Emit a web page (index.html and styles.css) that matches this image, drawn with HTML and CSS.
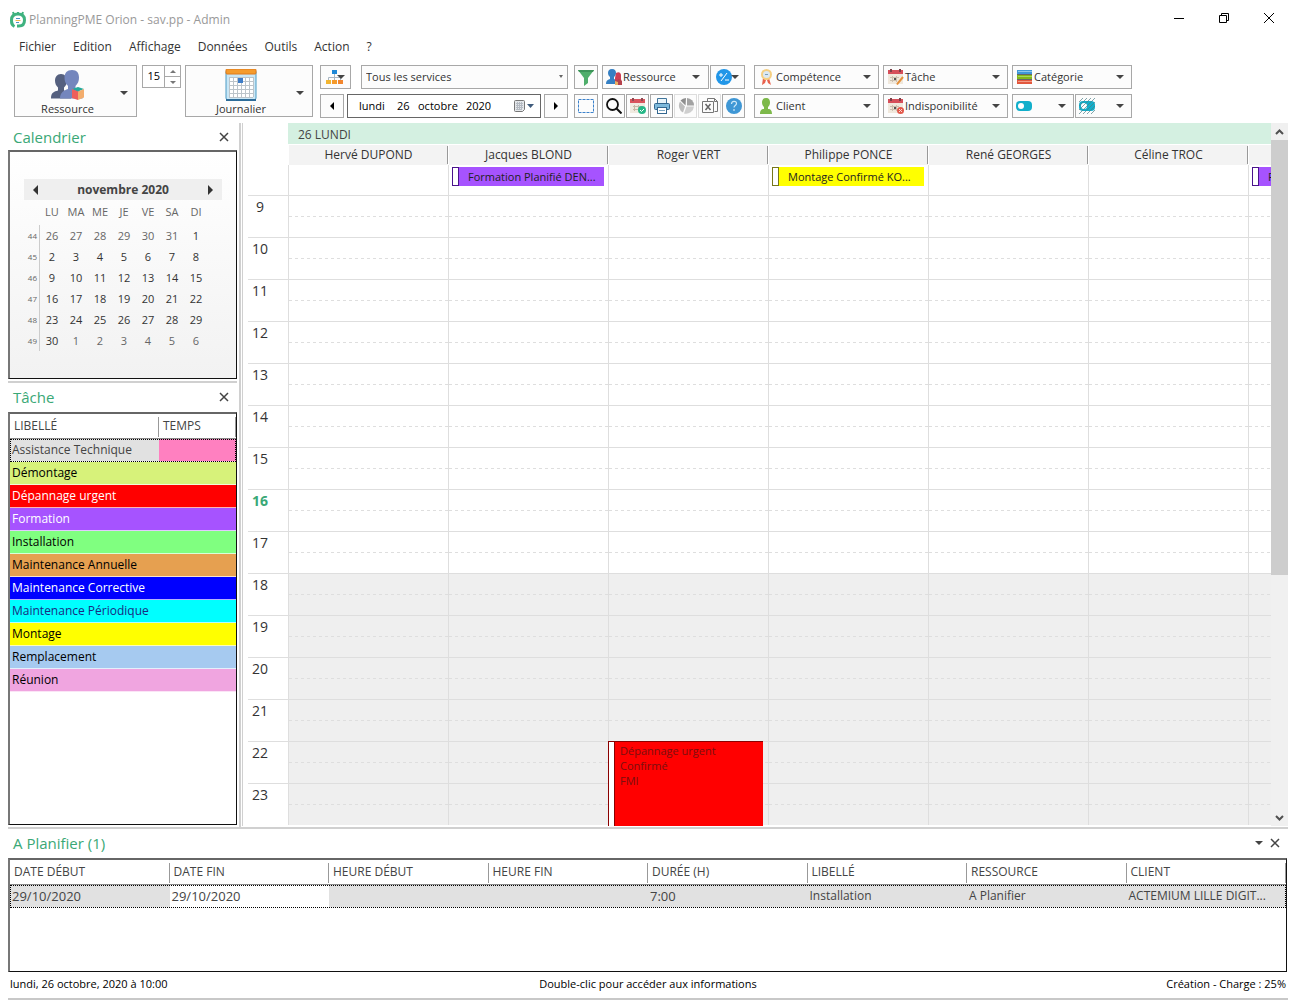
FILE: index.html
```html
<!DOCTYPE html>
<html lang="fr">
  <head>
    <meta charset="utf-8" />
    <title>PlanningPME Orion - sav.pp - Admin</title>
    <link rel="stylesheet" href="styles.css">
  </head>

  <body>
    <div class="app">
      <header class="titlebar">
        <svg class="logo" width="16" height="18" viewBox="0 0 16 18">
          <path d="M4.500 15.500C1.500 14 1.500 12 1.500 9c0-4 2-6 6.500-6s6.500 2 6.500 6-2 6-5.500 6H7" fill="none" stroke="#3fb27f" stroke-width="3" />
          <path d="M4 4L3 1M8 3V1M12 4l1-3" stroke="#3fb27f" stroke-width="2" />
          <path d="M6 7.500h4M6 11.500h3" stroke="#4b8fc4" />
          <path d="M5.500 9.500h5" stroke="#f2b84b" />
        </svg>
        <span class="title">PlanningPME Orion - sav.pp - Admin</span>
        <div class="win-btns">
          <button class="win-btn" aria-label="Réduire"><svg width="12" height="12"><path d="M1 6.500h10" stroke="#000" /></svg></button>
          <button class="win-btn" aria-label="Restaurer"><svg width="12" height="12"><path d="M1.500 3.500h7v7h-7zM3.500 3.500v-2h7v7h-2" fill="none" stroke="#000" /></svg></button>
          <button class="win-btn" aria-label="Fermer"><svg width="12" height="12"><path d="M1 1l10 10M11 1L1 11" stroke="#000" /></svg></button>
        </div>
      </header>

      <nav class="menubar">
        <button>Fichier</button>
        <button>Edition</button>
        <button>Affichage</button>
        <button>Données</button>
        <button>Outils</button>
        <button>Action</button>
        <button>?</button>
      </nav>

      <div class="toolbar">
        <button class="big-btn">
          <span class="big-face">
            <svg width="34" height="32" viewBox="0 0 34 32">
              <path d="M10 5c4 0 6 3 6 6.500 0 3-1 5-3 7v3c4 1 7 3 7 8H0c0-6 3-7 7-8v-3c-2-2-3-4-3-7C4 8 6 5 10 5z" fill="#55607f" />
              <path d="M21 1c5 0 7 3 7 7.500 0 3.500-1 6-3.500 8.500v3c4 1 7 3 7 9.500H9c0-6 4-8 8-9.500v-3c-2.500-2.500-3.500-5-3.500-8.500C13.500 4 16 1 21 1z" fill="#7486bd" />
              <path d="M21 20l6-2 6 2-6 2.500z" fill="#25a99c" />
              <path d="M21 20l6 2.500V31l-6-2z" fill="#ee5f5b" />
              <path d="M27 22.500l6-2.500v8.500L27 31z" fill="#f3ad6d" />
            </svg>
            Ressource
          </span>
          <svg class="caret" width="8" height="4"><path d="M0 0h8L4 4z" /></svg>
        </button>

        <div class="spin">
          <input type="text" value="15" aria-label="Intervalle" />
          <div class="spin-btns">
            <button aria-label="Plus"><svg width="6" height="3"><path d="M0 3h6L3 0z" fill="#777" /></svg></button>
            <button aria-label="Moins"><svg width="6" height="3"><path d="M0 0h6L3 3z" fill="#777" /></svg></button>
          </div>
        </div>

        <button class="big-btn big-view">
          <span class="big-face">
            <svg width="32" height="32" viewBox="0 0 32 32">
              <rect x="1" y="1" width="30" height="30" rx="2" fill="#c9e7f6" stroke="#4a9ac4" />
              <path d="M1 31h30" stroke="#2d6c99" stroke-width="2" />
              <rect x="1" y="0" width="30" height="5" rx="1" fill="#f59b2c" stroke="#dd7a1c" />
              <rect x="4" y="8" width="24" height="20" fill="#fff" />
              <path d="M4 8.500h24M4 12.500h24M4 16.500h24M4 20.500h24M4 24.500h24M4 28.500h24M4.500 8v20M8.500 8v20M12.500 8v20M16.500 8v20M20.500 8v20M24.500 8v20M28.500 8v20" stroke="#bcc4ca" />
              <rect x="13" y="9" width="5" height="5" fill="#3e7cc6" />
            </svg>
            Journalier
          </span>
          <svg class="caret" width="8" height="4"><path d="M0 0h8L4 4z" /></svg>
        </button>

        <div class="tool-group group-date">
          <div class="tool-row">
            <button class="btn services-btn" aria-label="Services">
              <svg width="20" height="16" viewBox="0 0 20 16">
                <path d="M8.500 4v7M2.500 12V8.500h12V12" fill="none" stroke="#a9b6c2" />
                <rect x="6" y="1" width="5" height="4" fill="#1d87d6" />
                <rect x="0" y="11" width="5" height="4" fill="#f2b531" />
                <rect x="6" y="11" width="5" height="4" fill="#f59a2a" />
                <rect x="12" y="11" width="5" height="4" fill="#f2862e" />
                <path d="M11 6h8l-4 4z" fill="#444" />
              </svg>
            </button>
            <div class="select-box">
              <select aria-label="Service"><option>Tous les services</option></select>
              <svg width="4" height="3"><path d="M0 0h4L2 3z" fill="#666" /></svg>
            </div>
          </div>
          <div class="tool-row row-near">
            <button class="btn btn-sq" aria-label="Jour précédent"><svg width="4" height="8"><path d="M4 0v8L0 4z" /></svg></button>
            <div class="date-box">
              <input class="date-day" type="text" value="lundi" aria-label="Jour de la semaine" />
              <input class="date-num" type="text" value="26" aria-label="Jour" />
              <input class="date-month" type="text" value="octobre" aria-label="Mois" />
              <input class="date-year" type="text" value="2020" aria-label="Année" />
              <button aria-label="Ouvrir le calendrier">
                <svg width="20" height="12" viewBox="0 0 20 12">
                  <path d="M.5 1.500q0-1 1-1h8q1 0 1 1v8l-2 2h-7q-1 0-1-1z" fill="#e4e7ea" stroke="#777" />
                  <path d="M2 3.500h7M2 5.500h7M2 7.500h7M2 9.500h5M3.500 2v8M5.500 2v8M7.500 2v8" stroke="#b4bac2" />
                  <path d="M13 4h7l-3.500 4z" fill="#3f5b7c" />
                </svg>
              </button>
            </div>
            <button class="btn btn-sq" aria-label="Jour suivant"><svg width="4" height="8"><path d="M0 0v8l4-4z" /></svg></button>
          </div>
        </div>

        <div class="tool-group group-filter">
          <div class="tool-row row-tools">
            <button class="btn btn-sq" aria-label="Filtre">
              <svg width="16" height="17" viewBox="0 0 16 17"><path d="M0 1h16l-6 8v5l-4 3V9z" fill="#4fae6b" /><path d="M0 1h16l-1 2H1z" fill="#3d9459" /></svg>
            </button>
            <button class="btn res-btn">
              <svg width="17" height="16" viewBox="0 0 17 16">
                <path d="M6 0c3 0 4 2 4 4s-1 3-2 4v2c3 1 4 2 4 5H0c0-3 1-4 4-5V8C3 7 2 6 2 4s1-4 4-4z" fill="#3580c4" />
                <path d="M10 4c3-2 5 0 5 2v4l1 5H9V9z" fill="#ce3f55" />
                <path d="M9 12l4-2 3 2v4H9z" fill="#b5424d" />
                <path d="M9 12l3 1v3H9z" fill="#eab267" />
              </svg>
              <span>Ressource</span>
              <svg class="caret" width="8" height="4"><path d="M0 0h8L4 4z" /></svg>
            </button>
            <button class="btn sign-btn" aria-label="Plus ou moins">
              <svg width="24" height="16" viewBox="0 0 24 16">
                <circle cx="8" cy="8" r="8" fill="#2196e8" />
                <path d="M5 12l6-8M3 6h4M5 4v4M9 11h4" stroke="#fff" fill="none" />
                <path d="M15 6h8l-4 4z" fill="#444" />
              </svg>
            </button>
          </div>
          <div class="tool-row row-tools">
            <button class="btn btn-sq" aria-label="Sélection">
              <svg width="16" height="16" viewBox="0 0 16 16"><rect x=".5" y="1.500" width="15" height="13" fill="none" stroke="#3c82cc" stroke-dasharray="3 1" /></svg>
            </button>
            <button class="btn btn-tool" aria-label="Rechercher">
              <svg width="16" height="16" viewBox="0 0 16 16"><circle cx="6.500" cy="6.500" r="5.500" fill="none" stroke="#111" stroke-width="1.800" /><path d="M10.500 10.500l5 5" stroke="#111" stroke-width="2" /></svg>
            </button>
            <button class="btn btn-tool" aria-label="Tâches validées">
              <svg width="16" height="16" viewBox="0 0 16 16">
                <rect y="1" width="15" height="14" fill="#f0eae0" /><rect y="1" width="15" height="4" fill="#d9535c" />
                <path d="M3 0v3M12 0v3" stroke="#8c4a52" stroke-width="2" />
                <path d="M3 8.500h9M3 11.500h7M4.500 7v6M8.500 7v6" stroke="#c7b9a6" />
                <circle cx="12" cy="12" r="4" fill="#27b888" /><path d="M10 12l1.500 1.500L14 11" stroke="#fff" fill="none" />
              </svg>
            </button>
            <button class="btn btn-tool" aria-label="Imprimer">
              <svg width="16" height="16" viewBox="0 0 16 16">
                <path d="M3.500 5V.5h9V5" fill="#eaf5fa" stroke="#41749a" />
                <rect x=".5" y="5.500" width="15" height="6" rx="1" fill="#7db9db" stroke="#33678f" />
                <rect x="3.500" y="9.500" width="9" height="6" fill="#fff" stroke="#33678f" /><path d="M5 12.500h6" stroke="#7aa6c2" />
              </svg>
            </button>
            <button class="btn btn-tool btn-off" aria-label="Statistiques" disabled>
              <svg width="16" height="16" viewBox="0 0 16 16">
                <path d="M7 8.500L2 3.500A8 8 0 0 0 5 14.500z" fill="#bdbdbd" />
                <path d="M7.500 7.500L2.500 2.500A8 8 0 0 1 8 0z" fill="#8e8e8e" />
                <path d="M9 0a7.500 7.500 0 0 1 7 7.500H9z" fill="#a3a3a3" />
                <path d="M8.500 8.500H16A8 8 0 0 1 6 15.500z" fill="#cfcfcf" />
              </svg>
            </button>
            <button class="btn btn-tool btn-off" aria-label="Exporter" disabled>
              <svg width="16" height="16" viewBox="0 0 16 16"><path d="M5.500 3V.5h7l3 3v10h-3M12.500 .5v3h3M.5 3.500h11v11H.5z" fill="none" stroke="#777" /><path d="M3.500 6l5 6M8.500 6l-5 6" stroke="#666" stroke-width="1.500" /></svg>
            </button>
            <button class="btn btn-tool" aria-label="Aide">
              <svg width="16" height="16" viewBox="0 0 16 16"><circle cx="8" cy="8" r="8" fill="#3f97d5" /><path d="M5.500 6c0-3.500 5-3.500 5-.5 0 2-2.500 2-2.500 4M8 11v2" fill="none" stroke="#cfe9f8" stroke-width="1.200" /></svg>
            </button>
          </div>
        </div>

        <div class="tool-group group-criteria">
          <button class="btn crit">
            <svg width="16" height="16" viewBox="0 0 16 16">
              <path d="M4 9l-1 7 3-2 1-3zM10 9l2 7-3-2-1-3z" fill="#e8604c" />
              <circle cx="7.500" cy="5.500" r="5.500" fill="#f5cf82" /><circle cx="7.500" cy="5.500" r="3.500" fill="#dce9f2" /><path d="M6 5.500h3" stroke="#7b9db6" />
            </svg>
            <span>Compétence</span>
            <svg class="caret" width="8" height="4"><path d="M0 0h8L4 4z" /></svg>
          </button>
          <button class="btn crit">
            <svg width="16" height="16" viewBox="0 0 16 16">
              <rect y="1" width="15" height="14" fill="#f0e8dc" /><rect y="1" width="15" height="4" fill="#d64f5a" />
              <path d="M3 0v3M12 0v3" stroke="#7c4048" stroke-width="2" />
              <path d="M2 8.500h9M2 11.500h7M4.500 7v6M8.500 7v6" stroke="#cbbfae" /><rect x="6" y="9" width="2" height="2" fill="#555" />
              <path d="M15 8l-5 6-1 1.500" stroke="#e6913c" stroke-width="2" fill="none" />
            </svg>
            <span>Tâche</span>
            <svg class="caret" width="8" height="4"><path d="M0 0h8L4 4z" /></svg>
          </button>
          <button class="btn crit">
            <svg width="16" height="16" viewBox="0 0 16 16">
              <rect y="1" width="15" height="4" fill="#3f97d8" /><rect y="6" width="15" height="4" fill="#83b81a" /><rect y="11" width="15" height="4" fill="#e2573d" />
              <path d="M0 5.500h15M0 10.500h15" stroke="#666" />
              <path d="M1 2.500h14" stroke="#8cc7ee" /><path d="M1 7.500h14" stroke="#a9d65a" /><path d="M1 12.500h14" stroke="#f29a84" />
            </svg>
            <span>Catégorie</span>
            <svg class="caret" width="8" height="4"><path d="M0 0h8L4 4z" /></svg>
          </button>
          <button class="btn crit">
            <svg width="16" height="16" viewBox="0 0 16 16"><path d="M7 0c3 0 4 2 4 4.500S10 8 9 9v2c3 0 4 2 4 5H1c0-3 1-5 4-5V9C4 8 3 7 3 4.500S4 0 7 0z" fill="#7db94a" /></svg>
            <span>Client</span>
            <svg class="caret" width="8" height="4"><path d="M0 0h8L4 4z" /></svg>
          </button>
          <button class="btn crit">
            <svg width="16" height="16" viewBox="0 0 16 16">
              <rect y="1" width="15" height="14" fill="#f0e8dc" /><rect y="1" width="15" height="4" fill="#d64f5a" />
              <path d="M3 0v3M12 0v3" stroke="#7c4048" stroke-width="2" />
              <path d="M2 8.500h9M2 11.500h7M4.500 7v6M8.500 7v6" stroke="#cbbfae" /><rect x="6" y="9" width="2" height="2" fill="#555" />
              <circle cx="12.500" cy="12.500" r="3.500" fill="#e2584a" /><path d="M11 11l3 3M14 11l-3 3" stroke="#fbd9d4" />
            </svg>
            <span>Indisponibilité</span>
            <svg class="caret" width="8" height="4"><path d="M0 0h8L4 4z" /></svg>
          </button>
          <div class="crit-pair">
            <button class="btn crit toggle-a" aria-label="État">
              <svg width="16" height="10" viewBox="0 0 16 10"><rect width="16" height="10" rx="4" fill="#12afcb" /><circle cx="5" cy="5" r="3" fill="#fff" /></svg>
              <svg class="caret" width="8" height="4"><path d="M0 0h8L4 4z" /></svg>
            </button>
            <button class="btn crit toggle-b" aria-label="État hachuré">
              <svg width="16" height="16" viewBox="0 0 16 16"><rect y="3" width="16" height="10" rx="4" fill="#12afcb" /><circle cx="5" cy="8" r="3" fill="#fff" /><path d="M0 4l4-4M0 8l8-8M0 12l12-12M0 16L16 0M4 16L16 4M8 16l8-8M12 16l4-4" stroke="#4c7f88" stroke-width=".7" /></svg>
              <svg class="caret" width="8" height="4"><path d="M0 0h8L4 4z" /></svg>
            </button>
          </div>
        </div>
      </div>

      <div class="main">
        <aside class="side">
          <section class="panel panel-cal">
            <div class="panel-head">
              <h2>Calendrier</h2>
              <button aria-label="Fermer Calendrier"><svg width="10" height="10"><path d="M1 1l8 8M9 1L1 9" /></svg></button>
            </div>
            <div class="box cal">
              <div class="cal-nav">
                <button aria-label="Mois précédent"><svg width="5" height="10"><path d="M5 0v10L0 5z" /></svg></button>
                <b>novembre 2020</b>
                <button aria-label="Mois suivant"><svg width="5" height="10"><path d="M0 0v10l5-5z" /></svg></button>
              </div>
              <table class="cal-days">
                <thead>
                  <tr><th></th><th>LU</th><th>MA</th><th>ME</th><th>JE</th><th>VE</th><th>SA</th><th>DI</th></tr>
                </thead>
                <tbody>
                  <tr><th>44</th><td class="out">26</td><td class="out">27</td><td class="out">28</td><td class="out">29</td><td class="out">30</td><td class="out">31</td><td>1</td></tr>
                  <tr><th>45</th><td>2</td><td>3</td><td>4</td><td>5</td><td>6</td><td>7</td><td>8</td></tr>
                  <tr><th>46</th><td>9</td><td>10</td><td>11</td><td>12</td><td>13</td><td>14</td><td>15</td></tr>
                  <tr><th>47</th><td>16</td><td>17</td><td>18</td><td>19</td><td>20</td><td>21</td><td>22</td></tr>
                  <tr><th>48</th><td>23</td><td>24</td><td>25</td><td>26</td><td>27</td><td>28</td><td>29</td></tr>
                  <tr><th>49</th><td>30</td><td class="out">1</td><td class="out">2</td><td class="out">3</td><td class="out">4</td><td class="out">5</td><td class="out">6</td></tr>
                </tbody>
              </table>
            </div>
          </section>

          <section class="panel panel-tasks">
            <div class="panel-head">
              <h2>Tâche</h2>
              <button aria-label="Fermer Tâche"><svg width="10" height="10"><path d="M1 1l8 8M9 1L1 9" /></svg></button>
            </div>
            <div class="box box-fill">
              <table class="list tasks">
                <thead>
                  <tr><th class="col-label">LIBELLÉ</th><th>TEMPS</th></tr>
                </thead>
                <tbody>
                  <tr class="selected"><td>Assistance Technique</td><td class="t-pink"></td></tr>
                  <tr class="t-lime"><td colspan="2">Démontage</td></tr>
                  <tr class="t-red"><td colspan="2">Dépannage urgent</td></tr>
                  <tr class="t-purple"><td colspan="2">Formation</td></tr>
                  <tr class="t-green"><td colspan="2">Installation</td></tr>
                  <tr class="t-orange"><td colspan="2">Maintenance Annuelle</td></tr>
                  <tr class="t-blue"><td colspan="2">Maintenance Corrective</td></tr>
                  <tr class="t-cyan"><td colspan="2">Maintenance Périodique</td></tr>
                  <tr class="t-yellow"><td colspan="2">Montage</td></tr>
                  <tr class="t-sky"><td colspan="2">Remplacement</td></tr>
                  <tr class="t-rose"><td colspan="2">Réunion</td></tr>
                </tbody>
              </table>
            </div>
          </section>
        </aside>

        <div class="planning">
          <div class="grid-wrap">
            <table class="grid">
              <thead>
                <tr class="row-day"><th></th><th class="day" colspan="7">26 LUNDI</th></tr>
                <tr class="row-names">
                  <th></th>
                  <th>Hervé DUPOND</th>
                  <th>Jacques BLOND</th>
                  <th>Roger VERT</th>
                  <th>Philippe PONCE</th>
                  <th>René GEORGES</th>
                  <th>Céline TROC</th>
                  <th></th>
                </tr>
              </thead>
              <tbody id="hours">
                <tr class="row-allday">
                  <th></th>
                  <td></td>
                  <td><div class="event ev-purple"><i></i><span>Formation Planifié DEN...</span></div></td>
                  <td></td>
                  <td><div class="event ev-yellow"><i></i><span>Montage Confirmé KO...</span></div></td>
                  <td></td>
                  <td></td>
                  <td><div class="event ev-purple"><i></i><span>F</span></div></td>
                </tr>
              </tbody>
            </table>
          </div>
          <div class="scrollbar">
            <button aria-label="Défiler vers le haut"><svg width="9" height="6"><path d="M1 5l3.500-3.500L8 5" /></svg></button>
            <div class="track"><div class="thumb"></div></div>
            <button aria-label="Défiler vers le bas"><svg width="9" height="6"><path d="M1 1l3.500 3.500L8 1" /></svg></button>
          </div>
        </div>
      </div>

      <section class="panel panel-todo">
        <div class="panel-head">
          <h2>A Planifier (1)</h2>
          <button aria-label="Options"><svg width="8" height="4"><path class="fill" d="M0 0h8L4 4z" /></svg></button>
          <button aria-label="Fermer A Planifier"><svg width="10" height="10"><path d="M1 1l8 8M9 1L1 9" /></svg></button>
        </div>
        <div class="box box-todo">
          <table class="list todo">
            <thead>
              <tr><th>DATE DÉBUT</th><th>DATE FIN</th><th>HEURE DÉBUT</th><th>HEURE FIN</th><th>DURÉE (H)</th><th>LIBELLÉ</th><th>RESSOURCE</th><th>CLIENT</th></tr>
            </thead>
            <tbody>
              <tr class="selected"><td class="num">29/10/2020</td><td class="num edit">29/10/2020</td><td></td><td></td><td class="num">7:00</td><td>Installation</td><td>A Planifier</td><td>ACTEMIUM LILLE DIGIT...</td></tr>
            </tbody>
          </table>
        </div>
      </section>

      <footer class="status">
        <span>lundi, 26 octobre, 2020 à 10:00</span>
        <span>Double-clic pour accéder aux informations</span>
        <span>Création - Charge : 25%</span>
      </footer>
    </div>
    <script src="app.js"></script>
  </body>
</html>
```
FILE: styles.css
```css
* {
    box-sizing: border-box;
}
body {
    margin: 0;
    background: #fff;
    color: #333;
    font-family: "Open Sans", "Noto Sans", sans-serif;
    font-size: 12px;
    line-height: 16px;
}
button, input, select {
    font: inherit;
    color: inherit;
    margin: 0;
    padding: 0;
    border: 0;
    background: none;
}
svg {
    flex: none;
    display: block;
}
table {
    border-collapse: separate;
    border-spacing: 0;
    table-layout: fixed;
}
th, td {
    padding: 0;
    font-weight: normal;
}
.app {
    display: flex;
    flex-direction: column;
    height: 100vh;
    padding: 0 8px;
}

/* title + menu */
.titlebar {
    display: flex;
    align-items: center;
    height: 38px;
    color: #999;
    padding: 1px 4px 0 2px;
}
.title {
    flex: 1;
    padding-left: 3px;
}
.win-btns {
    display: flex;
    margin-bottom: 3px;
}
.win-btn {
    width: 45px;
    display: flex;
    justify-content: center;
}
.win-btn:last-child {
    width: 38px;
    padding-left: 8px;
}
.menubar {
    display: flex;
    gap: 17px;
    padding: 1px 11px 0;
    height: 27px;
    align-items: flex-start;
}

/* toolbar */
.toolbar {
    display: flex;
    align-items: flex-start;
    height: 58px;
    padding-left: 6px;
    font-size: 11px;
}
.big-btn, .btn, .spin, .select-box {
    border: 1px solid #a8a8a8;
    background: #fcfcfc;
}
.big-btn {
    display: flex;
    align-items: center;
    width: 123px;
    height: 52px;
    padding: 3px 8px 0 0;
}
.big-view {
    width: 128px;
}
.big-face {
    flex: 1;
    display: flex;
    flex-direction: column;
    align-items: center;
}
.caret {
    fill: #444;
    margin-left: auto;
}
.spin {
    display: flex;
    width: 39px;
    height: 23px;
    margin: 0 4px 0 5px;
    background: #fff;
}
.spin input {
    width: 21px;
    text-align: right;
    padding: 0 4px 2px 0;
    color: #000;
}
.spin-btns {
    flex: 1;
    display: flex;
    flex-direction: column;
    border-left: 1px solid #a8a8a8;
}
.spin-btns button {
    flex: 1;
    display: flex;
    justify-content: center;
    align-items: center;
}
.spin-btns button:first-child {
    border-bottom: 1px solid #a8a8a8;
}
.tool-group {
    display: flex;
    flex-direction: column;
    gap: 5px;
}
.tool-row {
    display: flex;
}
.btn {
    display: flex;
    align-items: center;
    justify-content: center;
    height: 24px;
}
.btn-sq {
    width: 24px;
}
.btn-tool {
    width: 23px;
}
.btn-off {
    border-color: #ddd;
}
.group-date {
    width: 248px;
    margin: 0 6px 0 7px;
}
.group-date .tool-row {
    gap: 10px;
}
.group-date .row-near {
    gap: 3px;
}
.services-btn {
    width: 31px;
}
.select-box {
    flex: 1;
    position: relative;
    height: 24px;
}
.select-box select {
    width: 100%;
    height: 22px;
    padding-left: 4px;
    appearance: none;
}
.select-box svg {
    position: absolute;
    right: 4px;
    top: 9px;
    pointer-events: none;
}
.date-box {
    flex: 1;
    display: flex;
    align-items: center;
    height: 24px;
    padding: 0 6px 0 11px;
    border: 1px solid #666;
    color: #000;
}
.date-day {
    width: 38px;
}
.date-num {
    width: 21px;
}
.date-month {
    width: 48px;
}
.date-year {
    width: 40px;
}
.date-box button {
    margin-left: auto;
}
.group-filter {
    width: 171px;
    margin-right: 9px;
}
.row-tools {
    gap: 1px;
}
.row-tools .btn-sq {
    margin-right: 3px;
}
.res-btn {
    flex: 1;
    padding: 0 8px 0 3px;
}
.sign-btn {
    width: 35px;
}
.group-criteria {
    display: grid;
    grid-template-columns: 125px 125px 120px;
    gap: 5px 4px;
}
.crit {
    padding: 0 7px 0 4px;
    gap: 1px;
}
.crit-pair {
    display: flex;
    gap: 1px;
}
.crit-pair .crit {
    padding-left: 3px;
}
.toggle-a {
    width: 62px;
}
.toggle-b {
    flex: 1;
}

/* panels */
.main {
    flex: 1;
    min-height: 0;
    display: flex;
}
.side {
    display: flex;
    flex-direction: column;
    flex: none;
    width: 233px;
    padding-right: 2px;
    border-right: 2px solid #d0d0d0;
}
.panel-cal {
    padding-bottom: 2px;
    border-bottom: 2px solid #d0d0d0;
}
.panel-tasks {
    flex: 1;
    min-height: 0;
    display: flex;
    flex-direction: column;
    padding-bottom: 2px;
}
.panel-head {
    display: flex;
    align-items: center;
    gap: 4px;
    height: 29px;
    padding: 0 7px 2px 5px;
}
.panel-cal .panel-head {
    height: 27px;
    padding-bottom: 0;
}
.panel-head h2 {
    flex: 1;
    margin: 0;
    font-size: 15px;
    font-weight: normal;
    color: #3aa876;
}
.panel-head button {
    display: flex;
    justify-content: center;
    min-width: 12px;
}
.panel-head path {
    stroke: #444;
    stroke-width: 1.5;
}
.panel-head .fill {
    fill: #444;
    stroke: none;
}
.box {
    border: 1px solid #111;
    border-top: 2px solid #666;
    border-left: 2px solid #777;
    overflow: hidden;
}
.box-fill {
    flex: 1;
    min-height: 0;
}

/* mini calendar */
.cal {
    padding: 27px 14px 27px;
    background: linear-gradient(#fff, #f2f2f2);
}
.cal-nav {
    display: flex;
    justify-content: space-between;
    align-items: center;
    height: 21px;
    padding: 0 9px;
    background: #efefef;
    color: #444;
}
.cal-nav svg {
    fill: #333;
}
.cal-days {
    width: 184px;
    text-align: center;
    font-size: 11px;
    color: #333;
}
.cal-days thead th {
    height: 25px;
    padding-bottom: 2px;
    color: #666;
}
.cal-days th:first-child {
    width: 16px;
}
.cal-days tbody th {
    font-size: 8px;
    color: #666;
    text-align: right;
    padding-right: 2px;
    border-right: 1px solid #ccc;
}
.cal-days td {
    height: 21px;
}
.cal-days .out {
    color: #666;
}

/* lists */
.list {
    width: 100%;
    color: #444;
    text-align: left;
    white-space: nowrap;
}
.list th {
    height: 25px;
    padding-left: 4px;
    border-bottom: 1px solid #888;
    background: linear-gradient(#999, #999) right 3px / 1px 20px no-repeat;
}
.list td {
    height: 23px;
    padding: 0 0 1px 2px;
    border-bottom: 1px solid rgba(255, 255, 255, .7);
    overflow: hidden;
    text-overflow: ellipsis;
}
.list .num {
    font-size: 13px;
}
.list .selected {
    background: #e1e1e1;
    outline: 1px dotted #000;
    outline-offset: -1px;
}
.list .edit {
    background: #fff;
}
.tasks .col-label {
    width: 149px;
}
.tasks tbody {
    color: #000;
}
.tasks .selected {
    color: #444;
}
.t-pink {
    background: #ff80c0;
}
.t-lime {
    background: #d7f27a;
}
.t-red {
    background: #f00;
    color: #fff;
}
.t-purple {
    background: #a653ff;
    color: #fff;
}
.t-green {
    background: #80ff80;
}
.t-orange {
    background: #e6a050;
}
.t-blue {
    background: #00f;
    color: #fff;
}
.t-cyan {
    background: #0ff;
    color: #1a2a80;
}
.t-yellow {
    background: #ff0;
}
.t-sky {
    background: #a6caf0;
}
.t-rose {
    background: #f0a5e0;
}

/* planning grid */
.planning {
    flex: 1;
    min-width: 0;
    display: flex;
    margin: 0 0 1px 1px;
    border-left: 1px solid #d0d0d0;
}
.grid-wrap {
    flex: 1;
    min-width: 0;
    overflow: hidden;
}
.grid {
    width: 1165px;
}
.grid th:first-child {
    width: 45px;
}
.row-day th {
    height: 22px;
}
.row-day .day {
    background: #d4f0e1;
    border-bottom: 1px solid #fff;
    text-align: left;
    padding: 2px 0 0 10px;
    color: #444;
}
.row-names th {
    height: 20px;
}
.row-names th + th {
    border-left: 1px solid #fff;
    background: linear-gradient(#999, #999) right 1px / 1px 18px no-repeat #f3f3f3;
}
.grid td {
    border-left: 1px solid #dedede;
    vertical-align: top;
}
.row-allday td {
    height: 30px;
    padding: 2px 4px 0 3px;
}
.slot {
    position: relative;
    height: 42px;
    border-top: 1px solid #dedede;
    background: repeating-linear-gradient(90deg, #dedede 0 3px, transparent 3px 6px) 0 20px / 100% 1px no-repeat;
}
.closed {
    background-color: #efefef;
}
.hour {
    vertical-align: top;
}
.hour span {
    display: block;
    height: 42px;
    margin-left: 5px;
    padding: 3px 16px 0 0;
    border-top: 1px solid #dedede;
    font-size: 14px;
}
.hour.now {
    font-weight: bold;
    color: #3aa876;
}
.event {
    display: flex;
    height: 19px;
    color: #222;
    font-size: 11px;
}
.event i {
    flex: none;
    width: 7px;
    background: #fff;
    border: 1px solid #4a148c;
}
.event span {
    padding: 2px 0 0 9px;
    white-space: nowrap;
}
.ev-purple {
    background: #a653ff;
}
.ev-yellow {
    background: #ff0;
}
.ev-yellow i {
    border-color: #77771a;
}
.ev-red {
    position: absolute;
    z-index: 1;
    top: -1px;
    left: -1px;
    right: 5px;
    height: 120px;
    background: #f00;
    border-top: 1px solid #8b0000;
    color: #7a0f0f;
    line-height: 15px;
}
.ev-red i {
    border-color: #8b0000;
    border-top: 0;
}
.ev-red span {
    padding: 1px 0 0 5px;
    white-space: pre-line;
}
.scrollbar {
    display: flex;
    flex-direction: column;
    flex: none;
    width: 17px;
    background: #f0f0f0;
}
.scrollbar button {
    height: 17px;
    display: flex;
    align-items: center;
    justify-content: center;
}
.scrollbar path {
    fill: none;
    stroke: #505050;
    stroke-width: 2;
}
.track {
    flex: 1;
}
.thumb {
    height: 65%;
    background: #cdcdcd;
}

/* bottom */
.panel-todo {
    border-top: 2px solid #d0d0d0;
}
.box-todo {
    height: 114px;
    margin-right: 1px;
}
.status {
    display: grid;
    grid-template-columns: 1fr auto 1fr;
    height: 28px;
    padding: 4px 2px 0;
    border-bottom: 2px solid #c8c8c8;
    color: #000;
    font-size: 11px;
}
.status span:last-child {
    text-align: right;
}
```
FILE: app.js
```js
var FIRST = 9, LAST = 23, CURRENT = 16, CLOSING = 18;
var RESOURCES = 7;
var body = document.getElementById('hours');

for (var h = FIRST; h <= LAST; h++) {
  var tr = document.createElement('tr');
  var th = document.createElement('th');
  th.className = h == CURRENT ? 'hour now' : 'hour';
  th.innerHTML = '<span>' + h + '</span>';
  tr.appendChild(th);
  for (var r = 0; r < RESOURCES; r++) {
    var td = document.createElement('td');
    td.className = h >= CLOSING ? 'slot closed' : 'slot';
    if (h == 22 && r == 2) {
      // urgent task, runs past the end of the day
      td.innerHTML = '<div class="event ev-red"><i></i><span>Dépannage urgent\nConfirmé\nFMI</span></div>';
    }
    tr.appendChild(td);
  }
  body.appendChild(tr);
}
```
